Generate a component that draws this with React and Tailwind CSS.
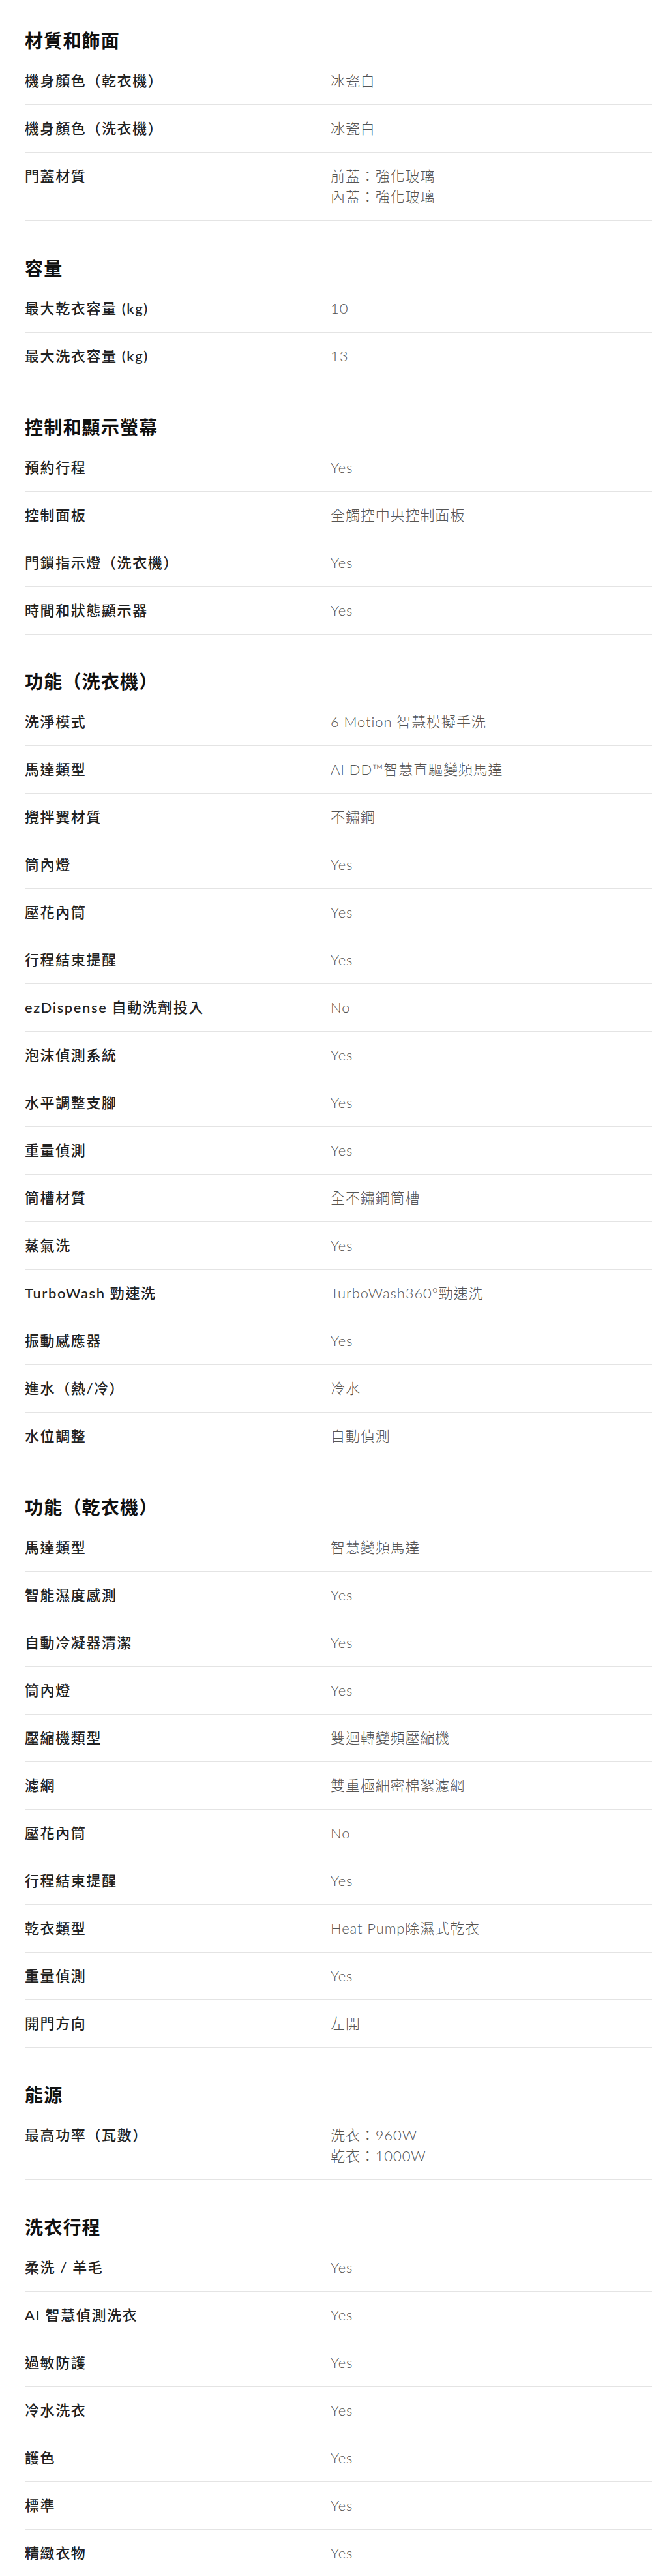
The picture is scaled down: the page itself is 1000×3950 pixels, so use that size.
import React from "react";

const sections = [
  {
    title: "材質和飾面",
    rows: [
      ["機身顏色（乾衣機）", ["冰瓷白"]],
      ["機身顏色（洗衣機）", ["冰瓷白"]],
      ["門蓋材質", ["前蓋：強化玻璃", "內蓋：強化玻璃"]],
    ],
  },
  {
    title: "容量",
    rows: [
      ["最大乾衣容量 (kg)", ["10"]],
      ["最大洗衣容量 (kg)", ["13"]],
    ],
  },
  {
    title: "控制和顯示螢幕",
    rows: [
      ["預約行程", ["Yes"]],
      ["控制面板", ["全觸控中央控制面板"]],
      ["門鎖指示燈（洗衣機）", ["Yes"]],
      ["時間和狀態顯示器", ["Yes"]],
    ],
  },
  {
    title: "功能（洗衣機）",
    rows: [
      ["洗淨模式", ["6 Motion 智慧模擬手洗"]],
      ["馬達類型", ["AI DD™智慧直驅變頻馬達"]],
      ["攪拌翼材質", ["不鏽鋼"]],
      ["筒內燈", ["Yes"]],
      ["壓花內筒", ["Yes"]],
      ["行程結束提醒", ["Yes"]],
      ["ezDispense 自動洗劑投入", ["No"]],
      ["泡沫偵測系統", ["Yes"]],
      ["水平調整支腳", ["Yes"]],
      ["重量偵測", ["Yes"]],
      ["筒槽材質", ["全不鏽鋼筒槽"]],
      ["蒸氣洗", ["Yes"]],
      ["TurboWash 勁速洗", ["TurboWash360°勁速洗"]],
      ["振動感應器", ["Yes"]],
      ["進水（熱/冷）", ["冷水"]],
      ["水位調整", ["自動偵測"]],
    ],
  },
  {
    title: "功能（乾衣機）",
    rows: [
      ["馬達類型", ["智慧變頻馬達"]],
      ["智能濕度感測", ["Yes"]],
      ["自動冷凝器清潔", ["Yes"]],
      ["筒內燈", ["Yes"]],
      ["壓縮機類型", ["雙迴轉變頻壓縮機"]],
      ["濾網", ["雙重極細密棉絮濾網"]],
      ["壓花內筒", ["No"]],
      ["行程結束提醒", ["Yes"]],
      ["乾衣類型", ["Heat Pump除濕式乾衣"]],
      ["重量偵測", ["Yes"]],
      ["開門方向", ["左開"]],
    ],
  },
  {
    title: "能源",
    rows: [["最高功率（瓦數）", ["洗衣：960W", "乾衣：1000W"]]],
  },
  {
    title: "洗衣行程",
    rows: [
      ["柔洗 / 羊毛", ["Yes"]],
      ["AI 智慧偵測洗衣", ["Yes"]],
      ["過敏防護", ["Yes"]],
      ["冷水洗衣", ["Yes"]],
      ["護色", ["Yes"]],
      ["標準", ["Yes"]],
      ["精緻衣物", ["Yes"]],
    ],
  },
];

export default function App() {
  return (
    <div className="bg-white w-[1000px] min-h-[3950px] pl-[38px] pt-[42px] font-['Lato','Noto_Sans_CJK_TC',sans-serif]">
      <div className="flex flex-col gap-[52px]">
        {sections.map((s) => (
          <section key={s.title}>
            <h2 className="text-[28px] leading-[40px] font-bold text-[#111] tracking-[1.2px] mb-[6px]">
              {s.title}
            </h2>
            <div className="flex flex-col">
              {s.rows.map(([label, vals], i) => (
                <div
                  key={i}
                  className="grid grid-cols-[469px_1fr] py-5 border-b border-[#e4e4e4] leading-[32px] text-[22px]"
                >
                  <div className="font-medium text-[#222] tracking-[1.6px]">{label}</div>
                  <div className="font-light text-[#555] tracking-[0.9px] flex flex-col">
                    {vals.map((v, j) => (
                      <span key={j}>{v}</span>
                    ))}
                  </div>
                </div>
              ))}
            </div>
          </section>
        ))}
      </div>
    </div>
  );
}
